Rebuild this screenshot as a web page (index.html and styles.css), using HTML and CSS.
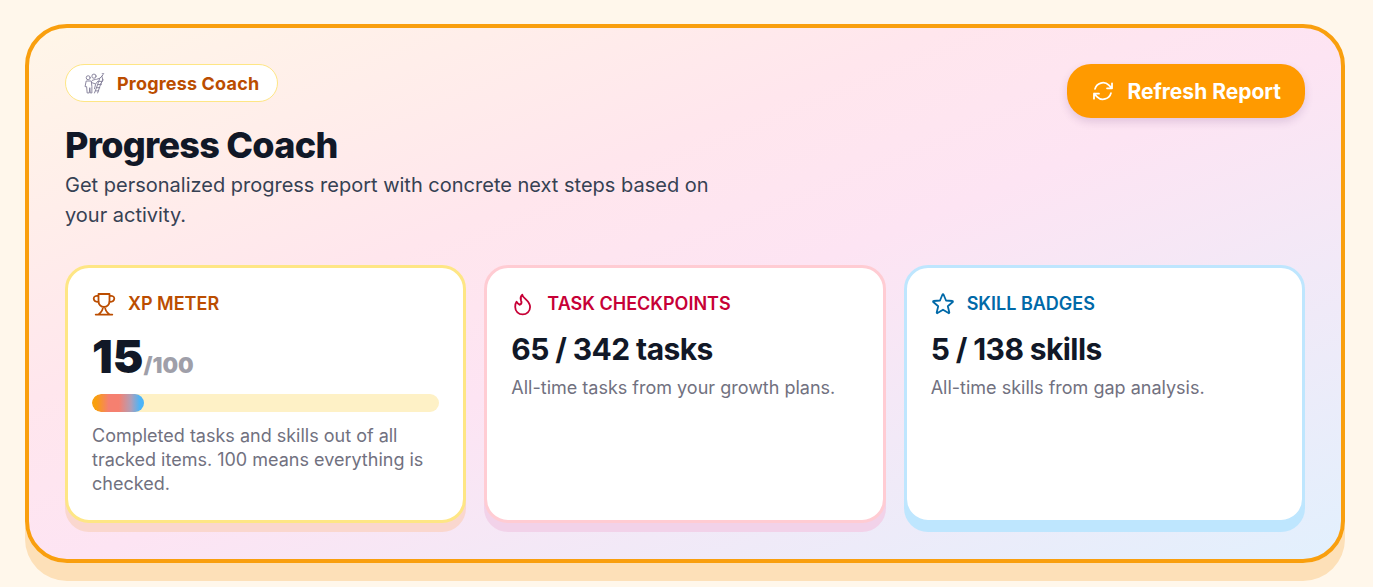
FILE: index.html
```
<!DOCTYPE html>
<html lang="en">
<head>
    <meta charset="UTF-8">
    <meta name="viewport" content="width=device-width, initial-scale=1.0">
    <title>Progress Coach</title>
    <link rel="stylesheet" href="styles.css">
</head>
<body>
    <main class="panel">
        <header class="panel-header">
            <div class="intro">
                <div class="pill">
                    <svg class="pill-icon" viewBox="0 0 20 20" aria-hidden="true">
                        <circle cx="4" cy="4.500" r="1.900"/>
                        <circle cx="9.500" cy="3" r="2"/>
                        <path d="M2 8 1 13l1.500 0 .5 6h2l.5-5 .5 5h1.500l0-6-.5-5zM7 9l4 1.500 2-2.500M8 7l3-1M11 11l-1 4M12 6l3-1 3-3M18 1a1 1 0 1 1 .1 0M15 5l-2 6-3 8M18 6l-3 7-2 6M14 8h3M13 11h3.500M12 14h3M11 17h3M17 3l1 4-2 3"/>
                    </svg>
                    <span>Progress Coach</span>
                </div>
                <h1 class="title">Progress Coach</h1>
                <p class="description">Get personalized progress report with concrete next steps based on your activity.</p>
            </div>
            <button type="button" class="refresh">
                <svg class="refresh-icon" viewBox="0 0 24 24" aria-hidden="true">
                    <path d="M16.023 9.348h4.992v-.001M2.985 19.644v-4.992m0 0h4.992m-4.993 0 3.181 3.183a8.250 8.250 0 0 0 13.803-3.700M4.031 9.865a8.250 8.250 0 0 1 13.803-3.700l3.181 3.182m0-4.991v4.990"/>
                </svg>
                Refresh Report
            </button>
        </header>

        <section class="cards">
            <article class="card card-xp">
                <h2 class="label">
                    <svg class="label-icon" viewBox="0 0 24 24" aria-hidden="true">
                        <path d="M6.500 2h11v7.500a5.500 5.500 0 0 1-11 0zM6.500 4.200C4 3.600 1.700 4.200 1.700 6.400c0 2.200 2 3.400 5.200 3.700M17.500 4.200c2.500-.6 4.800 0 4.800 2.200 0 2.200-2 3.400-5.200 3.700M11 15c-.2 2.700-1.200 5-4 7M13 15c.2 2.700 1.200 5 4 7M3.700 22.600h16.600"/>
                    </svg>
                    XP Meter
                </h2>
                <div class="score">15<span class="score-total">/100</span></div>
                <div class="meter" role="progressbar" aria-label="XP Meter" aria-valuenow="15" aria-valuemin="0" aria-valuemax="100">
                    <div class="meter-fill" style="width: 15%"></div>
                </div>
                <p class="note">Completed tasks and skills out of all tracked items. 100 means everything is checked.</p>
            </article>

            <article class="card card-tasks">
                <h2 class="label">
                    <svg class="label-icon" viewBox="0 0 24 24" aria-hidden="true">
                        <path d="M11.300 2.700c.2 3.500 7.800 6 7.800 12.300a7.200 7.200 0 0 1-14.900 0c0-2.300.3-4 1.300-5.300.7 1.500 1.700 2.500 3.300 3.100 1.900-1 2.100-2.700 1.200-4.500-.9-2.300-.2-4.200 1.300-5.600z"/>
                    </svg>
                    Task Checkpoints
                </h2>
                <div class="count">65 / 342 tasks</div>
                <p class="note">All-time tasks from your growth plans.</p>
            </article>

            <article class="card card-skills">
                <h2 class="label">
                    <svg class="label-icon" viewBox="0 0 24 24" aria-hidden="true">
                        <path d="M11.480 2.500a.56.56 0 0 1 1.040 0l2.500 6 6.400.5c.5 0 .7.700.3 1l-4.900 4.200 1.500 6.300c.1.500-.4.900-.8.600L12 17.700l-5.500 3.400c-.4.300-.9-.1-.8-.6l1.500-6.300L2.300 10c-.4-.3-.2-1 .3-1l6.400-.5z"/>
                    </svg>
                    Skill Badges
                </h2>
                <div class="count">5 / 138 skills</div>
                <p class="note">All-time skills from gap analysis.</p>
            </article>
        </section>
    </main>
</body>
</html>
```

FILE: styles.css
```
* {
    box-sizing: border-box;
}
body {
    margin: 0;
    padding: 24px 28px 24px 25px;
    font-family: Inter, "Liberation Sans", sans-serif;
    background: #fff7eb;
    color: #111827;
}
h1, h2, p {
    margin: 0;
}
svg {
    fill: none;
    stroke: currentColor;
    stroke-linecap: round;
    stroke-linejoin: round;
    flex-shrink: 0;
}
.panel {
    padding: 36px;
    border: 4px solid #f99f0e;
    border-radius: 42px;
    background: linear-gradient(to bottom right, #fff6e8 0%, #ffeeea 18%, #ffe6ed 35%, #fde4f3 52%, #e2f0fd 100%);
    box-shadow: 0 18px 0 #fde0b8;
}
.panel-header {
    display: flex;
    justify-content: space-between;
    align-items: flex-start;
    gap: 24px;
    margin-bottom: 35px;
}
.intro {
    max-width: 672px;
}
.pill {
    display: inline-flex;
    align-items: center;
    gap: 12px;
    height: 38px;
    padding: 0 18px;
    border: 1px solid #fee685;
    border-radius: 19px;
    background: white;
    color: #bb4d00;
    font-size: 18px;
    font-weight: 700;
    letter-spacing: 0.01em;
}
.pill-icon {
    width: 21px;
    height: 21px;
    color: #85819a;
    stroke-width: 0.9;
}
.title {
    margin-top: 20px;
    margin-bottom: 2px;
    font-size: 36px;
    line-height: 46px;
    font-weight: 800;
    letter-spacing: -0.02em;
}
.description {
    font-size: 20px;
    line-height: 30px;
    color: #364153;
}
.refresh {
    display: flex;
    align-items: center;
    gap: 12px;
    height: 54px;
    padding: 0 24px;
    border: none;
    border-radius: 24px;
    background: #ff9a00;
    box-shadow: 0 4px 8px rgba(80, 40, 110, 0.16);
    color: white;
    font-family: inherit;
    font-size: 21px;
    font-weight: 700;
    white-space: nowrap;
    cursor: pointer;
}
.refresh-icon {
    width: 24px;
    height: 24px;
    stroke-width: 1.8;
}
.cards {
    display: grid;
    grid-template-columns: repeat(3, 1fr);
    gap: 18px;
}
.card {
    padding: 24px;
    border: 3px solid;
    border-radius: 24px;
    background: white;
}
.card-xp {
    border-color: #fee685;
    box-shadow: 0 9px 0 #fad7ce;
}
.card-tasks {
    border-color: #ffccd3;
    box-shadow: 0 9px 0 #f2d2e9;
}
.card-skills {
    border-color: #bee6fe;
    box-shadow: 0 9px 0 #bee6fe;
}
.label {
    display: flex;
    align-items: center;
    gap: 12px;
    margin-bottom: 15px;
    font-size: 18px;
    line-height: 24px;
    font-weight: 600;
    text-transform: uppercase;
}
.label-icon {
    width: 24px;
    height: 24px;
    stroke-width: 1.8;
}
.card-xp .label {
    color: #bb4d00;
}
.card-tasks .label {
    color: #c70036;
}
.card-skills .label {
    color: #0069a8;
}
.score {
    margin-bottom: 13px;
    font-size: 46px;
    line-height: 50px;
    font-weight: 900;
}
.score-total {
    font-size: 22px;
    line-height: 1;
    color: #9f9fa9;
}
.meter {
    height: 18px;
    margin-bottom: 12px;
    border-radius: 9px;
    background: #fef1c6;
    overflow: hidden;
}
.meter-fill {
    height: 100%;
    border-radius: 9px;
    background: linear-gradient(to right, #f99f0e 8%, #f58070 32%, #f58070 52%, #b09fb8 75%, #4cb4f8 92%);
}
.count {
    margin-bottom: 9px;
    font-size: 30px;
    line-height: 36px;
    font-weight: 700;
    letter-spacing: -0.02em;
}
.note {
    font-size: 18px;
    line-height: 24px;
    color: #71717f;
}
```
